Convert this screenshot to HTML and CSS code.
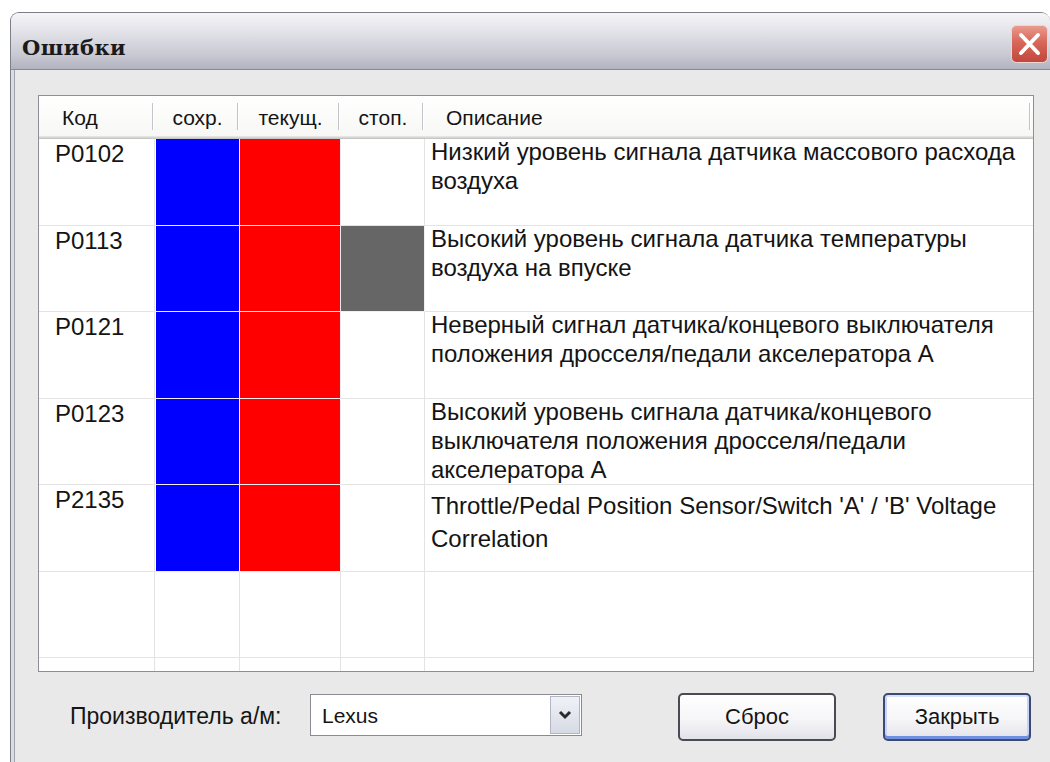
FILE: index.html
```html
<!DOCTYPE html>
<html lang="ru">
<head>
<meta charset="utf-8">
<title>Ошибки</title>
<link rel="stylesheet" href="styles.css">
</head>
<body>
<div class="window">
  <div class="titlebar">
    <span class="title">Ошибки</span>
    <button class="close" type="button" aria-label="Закрыть">
      <svg width="37" height="38" viewBox="0 0 37 38">
        <defs>
          <linearGradient id="closeFill" x1="0" y1="0" x2="0" y2="1">
            <stop offset="0" stop-color="#ea9c8e"/>
            <stop offset="0.45" stop-color="#d8675a"/>
            <stop offset="1" stop-color="#c0463c"/>
          </linearGradient>
        </defs>
        <rect x="0.5" y="0.5" width="36" height="37" rx="5" fill="url(#closeFill)" stroke="#f0d6d0"/>
        <path d="M10 10 L27 28 M27 10 L10 28" stroke="#ffffff" stroke-width="4" stroke-linecap="round"/>
      </svg>
    </button>
  </div>
  <div class="frame">
    <div class="client">
      <div class="list">
        <div class="head">
          <div class="hcell left">Код</div>
          <div class="hcell">сохр.</div>
          <div class="hcell">текущ.</div>
          <div class="hcell">стоп.</div>
          <div class="hcell left desc-head">Описание</div>
        </div>
        <div class="rows">
          <div class="row">
            <div class="cell code">P0102</div>
            <div class="cell saved"></div>
            <div class="cell current"></div>
            <div class="cell"></div>
            <div class="cell desc"><span class="txt">Низкий уровень сигнала датчика массового расхода воздуха</span></div>
          </div>
          <div class="row">
            <div class="cell code">P0113</div>
            <div class="cell saved"></div>
            <div class="cell current"></div>
            <div class="cell stop"></div>
            <div class="cell desc"><span class="txt">Высокий уровень сигнала датчика температуры воздуха на впуске</span></div>
          </div>
          <div class="row">
            <div class="cell code">P0121</div>
            <div class="cell saved"></div>
            <div class="cell current"></div>
            <div class="cell"></div>
            <div class="cell desc"><span class="txt">Неверный сигнал датчика/концевого выключателя положения дросселя/педали акселератора А</span></div>
          </div>
          <div class="row">
            <div class="cell code">P0123</div>
            <div class="cell saved"></div>
            <div class="cell current"></div>
            <div class="cell"></div>
            <div class="cell desc"><span class="txt">Высокий уровень сигнала датчика/концевого выключателя положения дросселя/педали акселератора А</span></div>
          </div>
          <div class="row">
            <div class="cell code">P2135</div>
            <div class="cell saved"></div>
            <div class="cell current"></div>
            <div class="cell"></div>
            <div class="cell desc latin"><span class="txt">Throttle/Pedal Position Sensor/Switch 'A' / 'B' Voltage Correlation</span></div>
          </div>
          <div class="row">
            <div class="cell"></div>
            <div class="cell"></div>
            <div class="cell"></div>
            <div class="cell"></div>
            <div class="cell"></div>
          </div>
          <div class="row">
            <div class="cell"></div>
            <div class="cell"></div>
            <div class="cell"></div>
            <div class="cell"></div>
            <div class="cell"></div>
          </div>
        </div>
      </div>
      <div class="footer">
        <span class="label">Производитель а/м:</span>
        <div class="combo">
          <span class="combo-value">Lexus</span>
          <span class="combo-arrow">
            <svg width="14" height="10" viewBox="0 0 14 10">
              <path d="M2 2 L7 7 L12 2" fill="none" stroke="#2a2a2a" stroke-width="3"/>
            </svg>
          </span>
        </div>
        <button class="btn reset" type="button">Сброс</button>
        <button class="btn default" type="button">Закрыть</button>
      </div>
    </div>
  </div>
</div>
</body>
</html>
```
FILE: styles.css
```css
html, body {
  margin: 0;
  padding: 0;
  background: #ffffff;
  overflow: hidden;
}

body {
  font-family: "Liberation Sans", Arial, sans-serif;
  color: #141414;
}

/* dialog window */
.window {
  margin: 12px 0 0 10px;
  width: 1040px;
  height: 760px;
  box-sizing: border-box;
  border: 1px solid #7e7e88;
  border-bottom: none;
  border-right: none;
  border-radius: 9px 9px 0 0;
  overflow: hidden;
  display: flex;
  flex-direction: column;
  background: #dcdce4;
}

.titlebar {
  height: 56px;
  flex: none;
  display: flex;
  align-items: flex-start;
  justify-content: space-between;
  background: linear-gradient(#f6f6f9 0%, #e4e4ea 30%, #c9c9d3 75%, #b2b2c0 100%);
  border-bottom: 1px solid #8a8a96;
}

.title {
  margin: 22px 0 0 11px;
  font-family: "DejaVu Serif", "Liberation Serif", serif;
  font-weight: bold;
  font-size: 21px;
  letter-spacing: 0.5px;
  color: #1a1a1a;
}

.close {
  margin: 12px 2px 0 0;
  padding: 0;
  border: none;
  background: none;
  width: 37px;
  height: 38px;
  display: block;
}

.close svg {
  display: block;
}

.frame {
  flex: 1;
  padding: 0 0 0 3px;
  display: flex;
}

.client {
  flex: 1;
  border-left: 1px solid #a2a2aa;
  background: #e9e9ea;
  padding: 25px 0 0 23px;
  display: flex;
  flex-direction: column;
}

/* list view */
.list {
  width: 996px;
  height: 577px;
  box-sizing: border-box;
  border: 1px solid #8e8e98;
  background: #ffffff;
  overflow: hidden;
  display: flex;
  flex-direction: column;
}

.head {
  height: 40px;
  flex: none;
  display: grid;
  grid-template-columns: 116px 85px 101px 84px 1fr;
  background: linear-gradient(#ffffff, #f7f7f5);
  border-bottom: 1px solid #e4e4e2;
  box-shadow: 0 1px 0 #d6d6d4, 0 2px 0 #c6c6c4;
  margin-bottom: 2px;
}

.hcell {
  position: relative;
  font-size: 21px;
  text-align: center;
  padding-top: 10px;
  color: #141414;
}

.hcell.left {
  text-align: left;
  padding-left: 23px;
}

.hcell.desc-head {
  padding-left: 21px;
}

.hcell::after {
  content: "";
  position: absolute;
  right: 2px;
  top: 7px;
  height: 27px;
  width: 1px;
  background: #c4c4c8;
  box-shadow: 1px 0 0 #ffffff;
}

.hcell.desc-head::after {
  right: 3px;
}

.rows {
  flex: 1;
  display: flex;
  flex-direction: column;
}

.row {
  height: 86.5px;
  flex: none;
  display: grid;
  grid-template-columns: 116px 85px 101px 84px 1fr;
}

.cell {
  box-sizing: border-box;
  border-right: 1px solid #e3e3e3;
  border-bottom: 1px solid #e3e3e3;
  font-size: 24px;
  line-height: 29px;
}

.cell:last-child {
  border-right: none;
}

.code {
  padding-left: 16px;
}

.saved {
  background: #0000ff;
  border-color: #f2eef6;
  border-left: 1px solid #ffffff;
}

.current {
  background: #ff0000;
  border-color: #f6eef0;
}

.stop {
  background: #666666;
  border-color: #f0f0f0;
}

.desc {
  padding: 0 8px 0 6px;
}

.desc .txt {
  display: block;
  margin-top: -2px;
}

.desc.latin .txt {
  line-height: 33px;
  margin-top: 4px;
}

/* bottom controls */
.footer {
  display: flex;
  align-items: flex-start;
  margin-top: 21px;
  padding-left: 32px;
}

.label {
  font-size: 23px;
  margin-top: 10px;
  width: 240px;
  flex: none;
  color: #151515;
}

.combo {
  margin-top: 1px;
  width: 272px;
  height: 42px;
  box-sizing: border-box;
  border: 1px solid #8a8a92;
  background: #ffffff;
  display: flex;
  align-items: stretch;
}

.combo-value {
  flex: 1;
  font-size: 21px;
  padding: 9px 0 0 11px;
}

.combo-arrow {
  width: 30px;
  margin: 1px;
  box-sizing: border-box;
  border: 1px solid #b2b6c2;
  background: linear-gradient(#f0f2f8, #d6dae4);
  display: flex;
  align-items: center;
  justify-content: center;
}

.btn {
  height: 48px;
  box-sizing: border-box;
  border: 2px solid #4a4a52;
  border-radius: 5px;
  background: linear-gradient(#ffffff 0%, #f6f6f8 55%, #e2e2ea 100%);
  font-family: "Liberation Sans", Arial, sans-serif;
  font-size: 22px;
  color: #141414;
  padding: 0;
}

.btn.reset {
  width: 158px;
  margin-left: 96px;
}

.btn.default {
  width: 148px;
  margin-left: 47px;
  border-color: #3a4a72;
  box-shadow: inset 0 -3px 0 #6f8fe0, inset 0 2px 0 #d6e2ff, inset 2px 0 0 #c6d4fa, inset -2px 0 0 #c6d4fa;
}
```
